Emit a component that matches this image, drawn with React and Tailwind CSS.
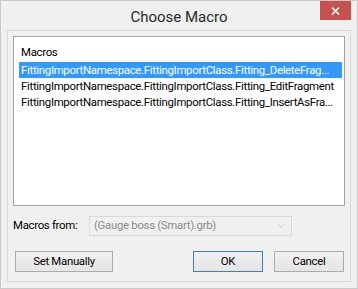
import { ChevronDown } from 'lucide-react';

const macros = [
  'FittingImportNamespace.FittingImportClass.Fitting_DeleteFrag...',
  'FittingImportNamespace.FittingImportClass.Fitting_EditFragment',
  'FittingImportNamespace.FittingImportClass.Fitting_InsertAsFra...',
];

const Button = ({ children, primary, className = '' }) => (
  <button
    className={`h-[21px] border bg-gradient-to-b from-[#f0f0f0] to-[#e5e5e5] text-[11.4px] tracking-[-0.3px] text-black ${primary ? 'border-[#3c7fb1]' : 'border-[#acacac]'} ${className}`}
  >
    {children}
  </button>
);

const App = () => {
  return (
    <div
      className="w-[358px] h-[289px] bg-[#f0f0f0] border border-[#c9c9c9] flex flex-col overflow-hidden"
      style={{ fontFamily: 'Roboto, "Noto Sans", sans-serif' }}
    >
      {/* Title bar */}
      <div className="h-[29px] shrink-0 grid grid-cols-[1fr_auto_1fr]">
        <div />
        <div className="pt-[7px] text-[15px] leading-[18px] text-[#2b2b2b]">Choose Macro</div>
        <div className="flex justify-end pr-[6px]">
          <div className="w-[31px] h-[19px] bg-[#c75050] flex items-center justify-center">
            <svg width="9" height="8" viewBox="0 0 9 8">
              <path d="M1 0.5 L8 7.5 M8 0.5 L1 7.5" stroke="white" strokeWidth="1.6" />
            </svg>
          </div>
        </div>
      </div>

      {/* Client area */}
      <div className="mx-[6px] mb-[6px] flex-1 border border-[#d9d9d9] px-[5px] pt-[5px] flex flex-col text-[11.4px] tracking-[-0.3px]">
        {/* List */}
        <div className="h-[170px] border border-[#a3a3a3] bg-white pt-[6px] pl-[5px] pr-[2px] leading-[16px] text-black">
          <div className="pl-[2px] h-[19px] pt-[1px]">Macros</div>
          <div>
            {macros.map((m, i) => (
              <div
                key={m}
                className={`h-[16px] pl-[2px] whitespace-nowrap overflow-hidden ${i === 0 ? 'bg-[#3399ff] text-white' : ''}`}
              >
                {m}
              </div>
            ))}
          </div>
        </div>

        {/* Macros from */}
        <div className="mt-[10px] flex items-center h-[20px]">
          <div className="w-[76px] text-black">Macros from:</div>
          <div className="w-[203px] h-[20px] border border-[#d9d9d9] bg-[#f0f0f0] flex items-center justify-between pl-[4px] pr-[5px]">
            <span className="text-[#8d8d8d]">(Gauge boss (Smart).grb)</span>
            <ChevronDown size={10} strokeWidth={2} className="text-[#c2c2c2]" />
          </div>
        </div>

        {/* Buttons */}
        <div className="mt-[15px] flex items-center pl-[2px]">
          <Button className="w-[98px]">Set Manually</Button>
          <div className="flex-1" />
          <Button primary className="w-[70px]">OK</Button>
          <Button className="w-[70px] ml-[11px] mr-[1px]">Cancel</Button>
        </div>
      </div>
    </div>
  );
};

export default App;
